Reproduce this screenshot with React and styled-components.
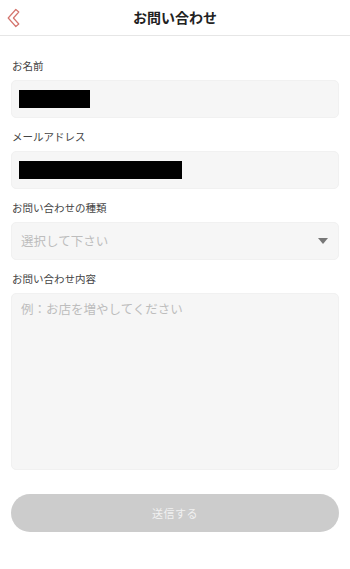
import React from "react";
import styled, { createGlobalStyle } from "styled-components";

const Global = createGlobalStyle`
  html, body { margin: 0; padding: 0; background: #fff; }
  body { font-family: "Noto Sans CJK JP", "Noto Sans", sans-serif; }
  * { box-sizing: border-box; }
`;

const Page = styled.div`
  width: 350px;
  min-height: 569px;
  background: #fff;
`;

const Header = styled.header`
  height: 36px;
  border-bottom: 1px solid #e6e6e6;
  display: grid;
  grid-template-columns: 40px 1fr 40px;
  align-items: center;
`;

const BackButton = styled.button`
  border: 0;
  background: none;
  padding: 0;
  width: 40px;
  height: 35px;
  display: flex;
  align-items: center;
  justify-content: flex-start;
  cursor: pointer;
`;

const Title = styled.h1`
  margin: 0;
  text-align: center;
  font-size: 14px;
  font-weight: 700;
  color: #222;
  line-height: 35px;
`;

const Form = styled.form`
  padding: 23px 11px 0 12px;
  display: flex;
  flex-direction: column;
`;

const Field = styled.div`
  display: flex;
  flex-direction: column;
  margin-bottom: 12px;
`;

const Label = styled.label`
  font-size: 10.5px;
  line-height: 14px;
  color: #444;
  margin-bottom: 7px;
`;

const Box = styled.div`
  margin-left: -1px;
  height: ${(p) => p.$h || 38}px;
  background: #f6f6f6;
  border: 1px solid #f1f1f1;
  border-radius: 5px;
  display: flex;
  align-items: ${(p) => (p.$top ? "flex-start" : "center")};
  justify-content: space-between;
  padding: ${(p) => (p.$top ? "6px 9px" : "0 9px")};
`;

const Redacted = styled.span`
  display: block;
  width: ${(p) => p.$w}px;
  height: 18px;
  background: #000;
  margin-left: -2px;
`;

const Placeholder = styled.span`
  font-size: 12.5px;
  color: #bdbdbd;
  line-height: 18px;
`;

const Caret = styled.svg`
  width: 10px;
  height: 6px;
  margin-right: 1px;
`;

const Submit = styled.button`
  margin-top: 12px;
  margin-left: -1px;
  height: 38px;
  border: 0;
  border-radius: 19px;
  background: #cccccc;
  color: #f1f1f1;
  font-family: inherit;
  font-size: 11px;
  letter-spacing: 0.5px;
`;

export default function App() {
  return (
    <Page>
      <Global />
      <Header>
        <BackButton aria-label="戻る">
          <svg width="24" height="30" viewBox="0 0 24 30" style={{ marginLeft: 6 }}>
            <path
              d="M9.8 6.5 L12.8 9 L7.4 15 L12.8 21 L9.8 23.5 L2.2 15 Z"
              fill="none"
              stroke="#d4746d"
              strokeWidth="1.2"
              strokeLinejoin="round"
            />
          </svg>
        </BackButton>
        <Title>お問い合わせ</Title>
        <span />
      </Header>
      <Form>
        <Field>
          <Label>お名前</Label>
          <Box>
            <Redacted $w={71} />
          </Box>
        </Field>
        <Field>
          <Label>メールアドレス</Label>
          <Box>
            <Redacted $w={163} />
          </Box>
        </Field>
        <Field>
          <Label>お問い合わせの種類</Label>
          <Box>
            <Placeholder>選択して下さい</Placeholder>
            <Caret viewBox="0 0 10 6">
              <path d="M0 0 H10 L5 6 Z" fill="#777" />
            </Caret>
          </Box>
        </Field>
        <Field>
          <Label>お問い合わせ内容</Label>
          <Box $h={177} $top>
            <Placeholder>例：お店を増やしてください</Placeholder>
          </Box>
        </Field>
        <Submit type="button">送信する</Submit>
      </Form>
    </Page>
  );
}
